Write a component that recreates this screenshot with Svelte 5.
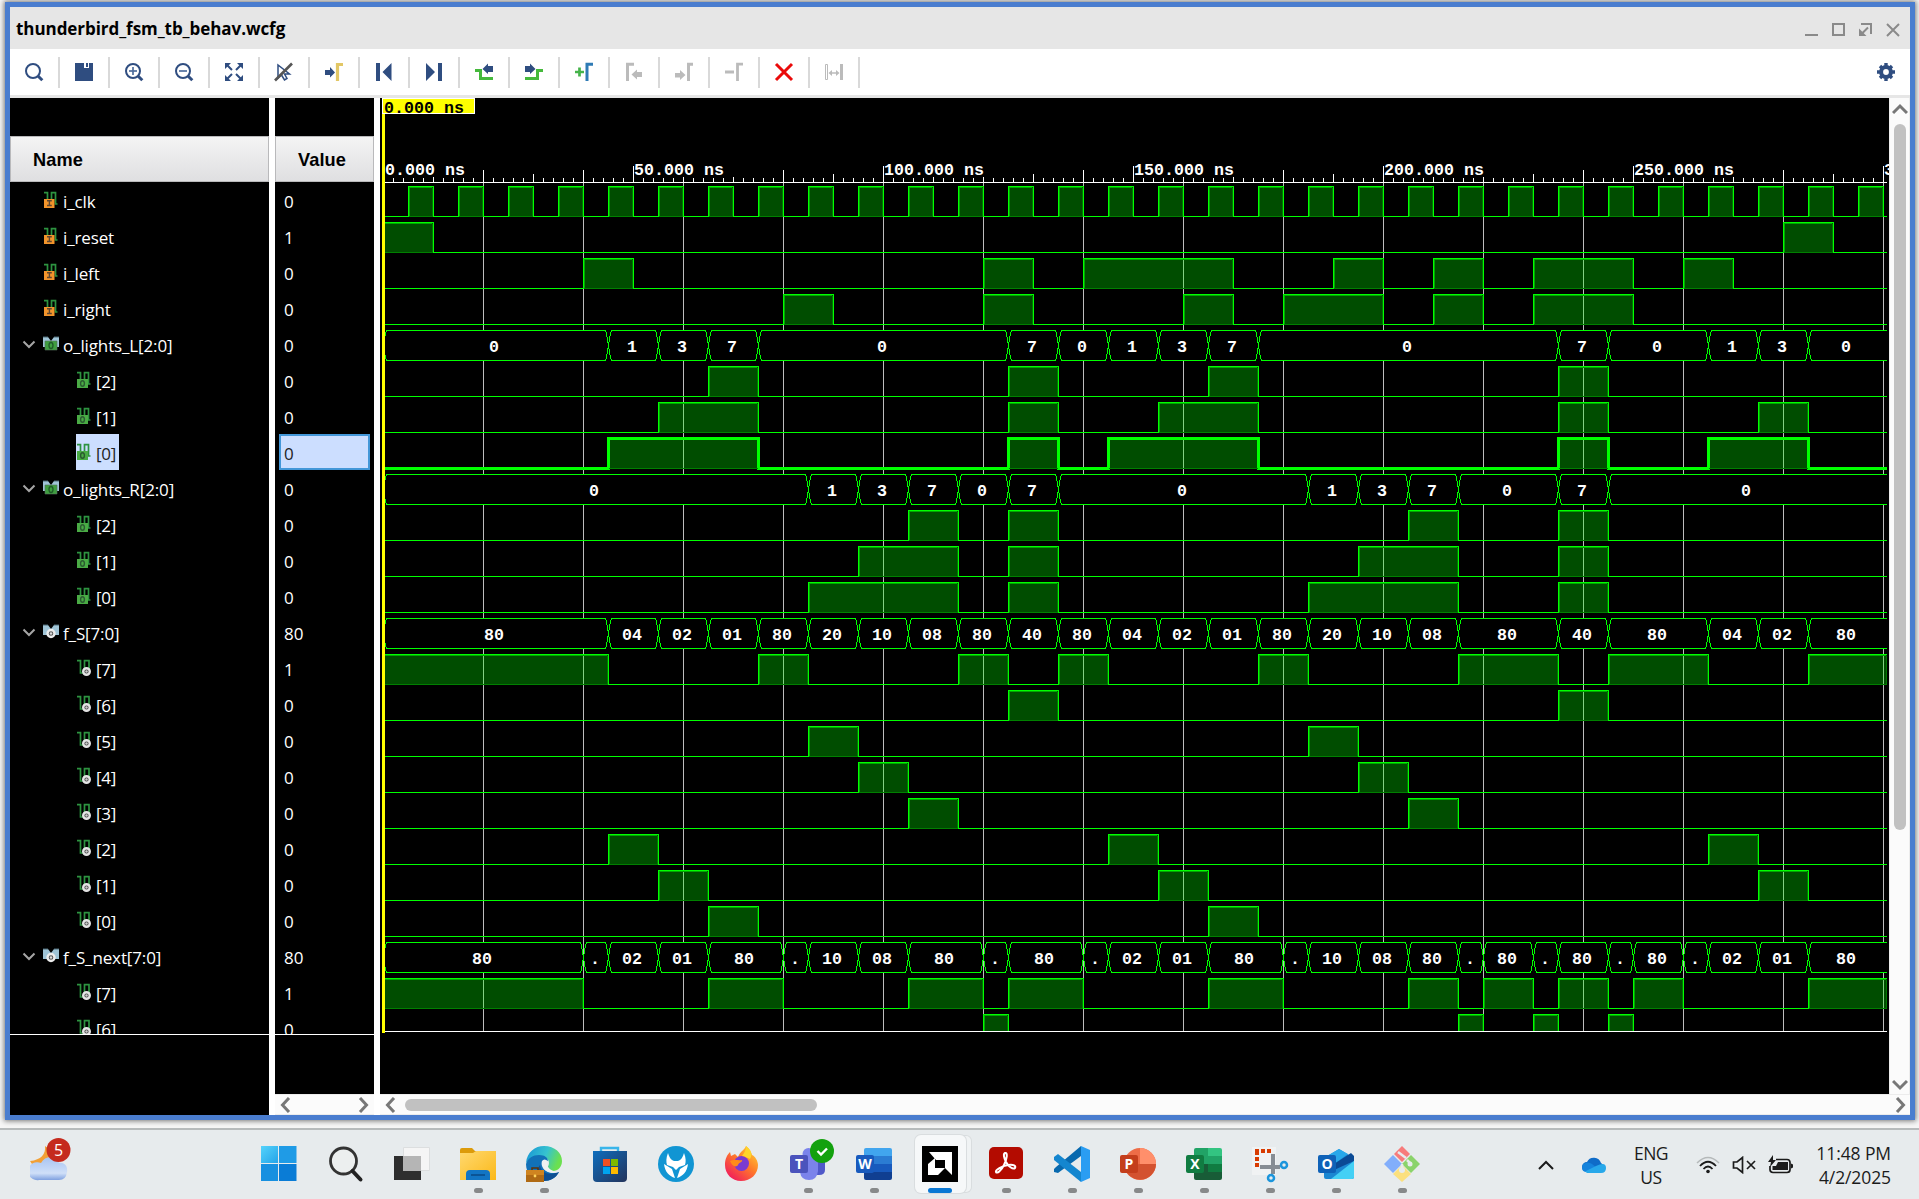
<script>
  // Time axis: 5px per nanosecond, starting at x = 383
  const X0 = 383, PX = 5, XEND = 1887, TOP = 186, PITCH = 36;
  const tx = (t) => Math.min(X0 + t * PX, XEND);

  const clk = Array.from({ length: 30 }, (_, i) => [i * 10 + 5, i * 10 + 10]);

  const bus = (start) => start.split(' ').map((s) => {
    const [t, v] = s.split('=');
    return { t: +t, v };
  });

  const signals = [
    { name: 'i_clk', kind: 'in', value: '0', high: clk },
    { name: 'i_reset', kind: 'in', value: '1', high: [[0, 10], [280, 290]] },
    { name: 'i_left', kind: 'in', value: '0', high: [[40, 50], [120, 130], [140, 170], [190, 200], [210, 220], [230, 250], [260, 270]] },
    { name: 'i_right', kind: 'in', value: '0', high: [[80, 90], [120, 130], [160, 170], [180, 200], [210, 220], [230, 250]] },
    { name: 'o_lights_L[2:0]', kind: 'outbus', group: true, value: '0', bus: bus('0=0 45=1 55=3 65=7 75=0 125=7 135=0 145=1 155=3 165=7 175=0 235=7 245=0 265=1 275=3 285=0') },
    { name: '[2]', kind: 'out', child: true, value: '0', high: [[65, 75], [125, 135], [165, 175], [235, 245]] },
    { name: '[1]', kind: 'out', child: true, value: '0', high: [[55, 75], [125, 135], [155, 175], [235, 245], [275, 285]] },
    { name: '[0]', kind: 'out', child: true, selected: true, value: '0', high: [[45, 75], [125, 135], [145, 175], [235, 245], [265, 285]] },
    { name: 'o_lights_R[2:0]', kind: 'outbus', group: true, value: '0', bus: bus('0=0 85=1 95=3 105=7 115=0 125=7 135=0 185=1 195=3 205=7 215=0 235=7 245=0') },
    { name: '[2]', kind: 'out', child: true, value: '0', high: [[105, 115], [125, 135], [205, 215], [235, 245]] },
    { name: '[1]', kind: 'out', child: true, value: '0', high: [[95, 115], [125, 135], [195, 215], [235, 245]] },
    { name: '[0]', kind: 'out', child: true, value: '0', high: [[85, 115], [125, 135], [185, 215], [235, 245]] },
    { name: 'f_S[7:0]', kind: 'sigbus', group: true, value: '80', bus: bus('0=80 45=04 55=02 65=01 75=80 85=20 95=10 105=08 115=80 125=40 135=80 145=04 155=02 165=01 175=80 185=20 195=10 205=08 215=80 235=40 245=80 265=04 275=02 285=80') },
    { name: '[7]', kind: 'sig', child: true, value: '1', high: [[0, 45], [75, 85], [115, 125], [135, 145], [175, 185], [215, 235], [245, 265], [285, 310]] },
    { name: '[6]', kind: 'sig', child: true, value: '0', high: [[125, 135], [235, 245]] },
    { name: '[5]', kind: 'sig', child: true, value: '0', high: [[85, 95], [185, 195]] },
    { name: '[4]', kind: 'sig', child: true, value: '0', high: [[95, 105], [195, 205]] },
    { name: '[3]', kind: 'sig', child: true, value: '0', high: [[105, 115], [205, 215]] },
    { name: '[2]', kind: 'sig', child: true, value: '0', high: [[45, 55], [145, 155], [265, 275]] },
    { name: '[1]', kind: 'sig', child: true, value: '0', high: [[55, 65], [155, 165], [275, 285]] },
    { name: '[0]', kind: 'sig', child: true, value: '0', high: [[65, 75], [165, 175]] },
    { name: 'f_S_next[7:0]', kind: 'sigbus', group: true, value: '80', bus: bus('0=80 40=. 45=02 55=01 65=80 80=. 85=10 95=08 105=80 120=. 125=80 140=. 145=02 155=01 165=80 180=. 185=10 195=08 205=80 215=. 220=80 230=. 235=80 245=. 250=80 260=. 265=02 275=01 285=80') },
    { name: '[7]', kind: 'sig', child: true, value: '1', high: [[0, 40], [65, 80], [105, 120], [125, 140], [165, 180], [205, 215], [220, 230], [235, 245], [250, 260], [285, 310]] },
    { name: '[6]', kind: 'sig', child: true, value: '0', high: [[120, 125], [215, 220], [230, 235], [245, 250]] }
  ];

  // Outline of a single-bit signal
  function tracePath(high, y) {
    const hi = y + 0.5, lo = y + 30.5;
    let d = `M${X0} ${high[0][0] === 0 ? hi : lo}`;
    for (const [a, b] of high) {
      if (a > 0) d += `H${tx(a) + 0.5}V${hi}`;
      if (b <= 300) d += `H${tx(b) + 0.5}V${lo}`;
    }
    return d + `H${XEND}`;
  }

  function segments(items) {
    return items.map((it, i) => {
      const last = i === items.length - 1;
      return { a: tx(it.t), b: last ? XEND : tx(items[i + 1].t), v: it.v, last };
    });
  }

  function hexPath(s, y) {
    const a = s.a + 0.5, b = s.b + 0.5, t = y + 0.5, m = y + 15.5, l = y + 30.5;
    if (s.last) return `M${s.b} ${t}H${a + 3}L${a + 2} ${t + 3}L${a} ${m}L${a + 2} ${l - 3}L${a + 3} ${l}H${s.b}`;
    return `M${a} ${m}L${a + 2} ${t + 3}L${a + 3} ${t}H${b - 3}L${b - 2} ${t + 3}L${b} ${m}L${b - 2} ${l - 3}L${b - 3} ${l}H${a + 3}L${a + 2} ${l - 3}Z`;
  }

  // Ruler ticks every 2ns, taller on tens; ticks below a label stay short
  const ticks = [];
  for (let t = 2; t <= 300; t += 2) {
    let y = 178;
    if (t % 50 === 0) y = 166;
    else if (t % 10 === 0) {
      const r = t % 50;
      if (r === 10 || (r === 20 && t > 50)) y = 177;
      else y = t % 20 === 0 ? 170 : 174;
    }
    ticks.push({ x: tx(t), y });
  }
  const grid = Array.from({ length: 15 }, (_, i) => tx((i + 1) * 20));
  const labels = [0, 50, 100, 150, 200, 250, 300];

  const tools = ['search', 'save', 'zoomin', 'zoomout', 'fit', 'nocursor', 'gotocursor', 'first', 'last', 'prevedge', 'nextedge', 'addmarker', 'prevmarker', 'nextmarker', 'delmarker', 'remove', 'span'];
  const apps = ['start', 'find', 'taskview', 'explorer', 'edge', 'store', 'wolf', 'firefox', 'teams', 'word', 'amd', 'acrobat', 'vscode', 'ppt', 'excel', 'snip', 'outlook', 'git'];
  const running = ['explorer', 'edge', 'teams', 'word', 'acrobat', 'vscode', 'ppt', 'excel', 'snip', 'outlook', 'git'];
</script>

{#snippet toolIcon(k)}
  <svg width="20" height="20" viewBox="0 0 20 20" fill="none">
    {#if k === 'search' || k === 'zoomin' || k === 'zoomout'}
      <circle cx="9" cy="9" r="7" stroke="#2f4d80" stroke-width="2" />
      <path d="M14 14l4.3 4.3" stroke="#2f4d80" stroke-width="3" />
      {#if k !== 'search'}<path d="M5 9h8" stroke="#4e6d9c" stroke-width="1.7" />{/if}
      {#if k === 'zoomin'}<path d="M9 5v8" stroke="#4e6d9c" stroke-width="1.7" />{/if}
    {:else if k === 'save'}
      <path d="M1 1h10v5h2V1h1v5h1V1h4v18H1z" fill="#2f4d80" /><path d="M10 1h5v5h-5z" fill="#fff" /><path d="M12 1h2v4h-2z" fill="#2f4d80" />
    {:else if k === 'fit'}
      <path d="M1 1h6L1 7zM19 1v6l-6-6zM1 19v-6l6 6zM19 19h-6l6-6z" fill="#2f4d80" />
      <path d="M3 3l5 5M17 3l-5 5M3 17l5-5M17 17l-5-5" stroke="#2f4d80" stroke-width="2" />
    {:else if k === 'nocursor'}
      <path d="M4 3v13l3.500-3 3 5 2.500-1.500-2.500-4.500h5z" stroke="#2f4d80" stroke-width="1.500" />
      <path d="M1 18.500L18 1.500" stroke="#555" stroke-width="2.600" />
    {:else if k === 'gotocursor'}
      <path d="M1 8h5V5l5 5.500-5 5V13H1z" fill="#2f4d80" /><path d="M13.500 19V2.500H19" stroke="#e2c766" stroke-width="3.200" />
    {:else if k === 'first'}
      <path d="M2 1h4v18H2zM17.500 1v18L8.500 10z" fill="#2f4d80" />
    {:else if k === 'last'}
      <path d="M14 1h4v18h-4zM2 1v18l9-9z" fill="#2f4d80" />
    {:else if k === 'prevedge'}
      <path d="M1 8.500h5.500v8H19" stroke="#45b93c" stroke-width="3" /><path d="M19 4h-5V1.500L8.500 7l5.500 5v-2h5z" fill="#2f4d80" />
    {:else if k === 'nextedge'}
      <path d="M19 8.500h-5.500v8H1" stroke="#45b93c" stroke-width="3" /><path d="M1 4h5V1.500L11.500 7 6 12v-2H1z" fill="#2f4d80" />
    {:else if k === 'addmarker'}
      <path d="M1 10h9M5.500 5.500v9" stroke="#45b34a" stroke-width="2.700" /><path d="M13 19V2.300H19" stroke="#2f7bb5" stroke-width="3" />
    {:else if k === 'prevmarker'}
      <path d="M3.500 19V2.200H10" stroke="#bbb" stroke-width="3" /><path d="M18 10h-5V7.500L7.500 12.500l5.500 5V15h5z" fill="#bbb" />
    {:else if k === 'nextmarker'}
      <path d="M14.500 19V2.200H19" stroke="#bbb" stroke-width="3" /><path d="M1 11h5V8l5.500 5L6 18v-2.500H1z" fill="#bbb" />
    {:else if k === 'delmarker'}
      <path d="M13.500 19V2.200H19M1 10h9" stroke="#bbb" stroke-width="2.800" />
    {:else if k === 'remove'}
      <path d="M2 2l16 16M18 2L2 18" stroke="#ea0a0a" stroke-width="3" />
    {:else}
      <path d="M1.500 2.500h2v15h-2z" stroke="#bbb" /><path d="M16 2h3v16h-3z" fill="#bbb" />
      <path d="M6 11h8" stroke="#bbb" stroke-width="1.500" /><path d="M8 8v6l-3.500-3zM12 8v6l3.500-3z" fill="#bbb" />
    {/if}
  </svg>
{/snippet}

{#snippet sigIcon(k)}
  <svg width="16" height="18" viewBox="0 0 16 18" fill="none">
    {#if k === 'outbus' || k === 'sigbus'}
      <path d="M0 2h5l3 4 3-4h5v10H0z" fill="#9fc4d6" /><path d="M0 2h5M11 2h5" stroke="#4b6673" />
      {#if k === 'outbus'}
        <path d="M2 6h12v9H2z" fill="#3f9f40" stroke="#56705a" stroke-width=".6" /><ellipse cx="8" cy="10.500" rx="2" ry="3" stroke="#1f5a28" stroke-width="1.300" />
      {:else}
        <circle cx="8" cy="10.500" r="3.500" stroke="#ececec" stroke-width="2.400" fill="#555" /><circle cx="8" cy="10.500" r="1.200" fill="#ddd" />
      {/if}
    {:else if k === 'sig'}
      <path d="M1 1.700h3.500V14h4V1.700h4.500V14" stroke="#2d9340" stroke-width="1.700" />
      <circle cx="10.500" cy="12.500" r="3.300" stroke="#e4e4e4" stroke-width="2.400" fill="#444" /><circle cx="10.500" cy="12.500" r="1.200" fill="#ccc" />
    {:else}
      <path d="M1 1.700h3.500V11h4V1.700h4V13h2" stroke="#2d9340" stroke-width="1.700" />
      {#if k === 'in'}
        <path d="M1 8h10.500v9H1z" fill="#f2942b" /><path d="M4 9.800h4.800M4 14.500h4.800M6.400 9.800v4.700" stroke="#5d4630" stroke-width="1.400" />
      {:else}
        <path d="M1 8h11v9H1z" fill="#4aab45" /><ellipse cx="6.500" cy="12.500" rx="1.900" ry="2.800" stroke="#2b5b31" stroke-width="1.400" />
      {/if}
    {/if}
  </svg>
{/snippet}

{#snippet arrow(d)}
  <svg width="16" height="16" viewBox="0 0 16 16" fill="none"><path {d} stroke="#777" stroke-width="3" /></svg>
{/snippet}

{#snippet badge(letter, color)}
  <rect x="0" y="9" width="18" height="18" rx="2" fill={color} />
  <text x="9" y="23" text-anchor="middle" class="badge-letter">{letter}</text>
{/snippet}

{#snippet appIcon(k)}
  <svg width="36" height="36" viewBox="0 0 36 36" fill="none">
    {#if k === 'start'}
      <path d="M-1 0h17v17H-1z" fill="url(#wa)" /><path d="M17 0h17.500v17H17z" fill="#1f9be6" /><path d="M-1 18h17v17H-1z" fill="#1790e0" /><path d="M17 18h17.500v17H17z" fill="#0a7cd6" />
    {:else if k === 'find'}
      <circle cx="15.500" cy="15" r="13" fill="#ecefef" stroke="#333" stroke-width="2.800" /><path d="M24.500 25l8 8.500" stroke="#222" stroke-width="4" stroke-linecap="round" />
    {:else if k === 'taskview'}
      <path d="M0 10h27v24H0z" fill="#2e2e2e" /><path d="M9.500 1.500h26v23h-26z" fill="#f5f5f5" stroke="#dcdedf" /><path d="M9 10h18v15H9z" fill="#b5b5b5" />
    {:else if k === 'explorer'}
      <path d="M0 4q0-2 2-2h10l3 3h19q2 0 2 2v5H0z" fill="#dc9b0b" /><path d="M0 7h13l3-2h20v29H0z" fill="url(#fold)" /><path d="M6 34v-6q0-4 4-4h16q4 0 4 4v6z" fill="#1275c4" /><path d="M11 29h14" stroke="#0a4a86" stroke-width="1.500" />
    {:else if k === 'edge'}
      <path d="M0 17C1 6 9 0 18 0c11 0 18 7 18 15 0 6-4 10-9 10-4 0-6-1-6-3 0-1 2-2 2-5 0-4-4-7-9-7-7 0-12 5-14 7z" fill="url(#edg)" />
      <path d="M0 18C2 12 7 9 13 9c6 0 9 3 9 6-4 0-6 4-4 8 3 4 9 5 15 3-3 6-9 9-15 9C8 36 0 28 0 18z" fill="#1271b8" />
      <path d="M14 19c1 8 9 11 19 7-3 6-9 9-15 9-6-3-8-11-4-16z" fill="#0f4f92" />
      <path d="M16 15q2-3 6 0c-2 4 0 10 11 11-7 2-15 0-17-6-.6-2-.4-4 0-5z" fill="#eef1f2" />
      <path d="M0 24h18v12H0z" fill="#b06a14" /><path d="M0 24h18v5H0z" fill="#cf8420" /><path d="M6 24v-2h6v2" stroke="#5d3208" stroke-width="1.500" /><circle cx="9" cy="30" r="1.400" fill="#ffd45a" />
    {:else if k === 'store'}
      <path d="M9 6V2h17v4" stroke="#39b5ea" stroke-width="2.400" /><path d="M1 5h34v27q0 4-4 4H5q-4 0-4-4z" fill="url(#sto)" />
      <path d="M11 13h7v7h-7z" fill="#f25022" /><path d="M19 13h7v7h-7z" fill="#7fba00" /><path d="M11 21h7v7h-7z" fill="#00a4ef" /><path d="M19 21h7v7h-7z" fill="#ffb900" />
    {:else if k === 'wolf'}
      <circle cx="18" cy="18" r="18" fill="#1195d3" />
      <path d="M10 7c1 4 3 7 6 8h4c3-1 5-4 6-8 2 5 2 9 1 12l-6 2-3 3-3-3-6-2c-1-3-1-7 1-12z" fill="#fff" />
      <path d="M6 18l8 5 3 9C11 30 7 26 6 18zM30 18l-8 5-3 9c6-2 10-6 11-14z" fill="#fff" />
    {:else if k === 'firefox'}
      <path d="M22 0c4 3 5 6 6 9 3 1 6 6 6 10 0 9-7 16-17 16C8 35 1 28 1 19 1 13 3 9 6 6l1 4 4-2 3 3C17 4 20 5 22 0z" fill="url(#ffx)" /><circle cx="17.500" cy="17.500" r="7.500" fill="#7a3bd0" /><path d="M6 15c4-2 9 0 12-1 1 2-3 2-4 5-2 3-6 1-8-4z" fill="#ff8b19" /><path d="M22 0c5 4 7 8 4 13-3-1-5-3-8-3 2-3 4-5 4-10z" fill="#ffd52b" />
    {:else if k === 'teams'}
      <circle cx="18.500" cy="8" r="6" fill="#7b83eb" /><path d="M22 12h13v12q0 5-6 5h-7z" fill="#5059c9" /><path d="M10 12h18v13q-1 9-9 9t-9-8z" fill="#7b83eb" />
      {@render badge('T', '#4b53bc')}
    {:else if k === 'word'}
      <path d="M8 4q0-2 2-2h24q2 0 2 2v6H8z" fill="#41a5ee" /><path d="M8 10h28v8H8z" fill="#2b7cd3" /><path d="M8 18h28v8H8z" fill="#185abd" /><path d="M8 26h28v6q0 2-2 2H10q-2 0-2-2z" fill="#103f91" />
      {@render badge('W', '#185abd')}
    {:else if k === 'amd'}
      <path d="M0 0h36v36H0z" fill="#000" /><path d="M7 6h23v23l-7-7v-8h-9z" fill="#fff" /><path d="M6 29V18l7-6v10h10l-7 7z" fill="#fff" />
    {:else if k === 'acrobat'}
      <rect x="1" y="1" width="34" height="32" rx="5" fill="#b30b00" /><path d="M17 7c3-1 2 6-1 12-3 6-7 9-8 7s6-6 12-7c6-1 8 1 7 3-2 2-7-2-9-6s-3-8-1-9z" stroke="#fff" stroke-width="2" />
    {:else if k === 'vscode'}
      <path d="M27 0L2 21l-2 2v3l4 1L27 10z" fill="#0869ae" /><path d="M0 11l4-3 23 18v10L0 14z" fill="#1486cf" /><path d="M27 0l9 4v28l-9 4z" fill="#2a9df2" />
    {:else if k === 'ppt'}
      <circle cx="20" cy="18" r="16" fill="#ed6c47" /><path d="M20 2a16 16 0 0 1 16 16H20z" fill="#ff8f6b" /><path d="M4.200 20A16 16 0 0 0 36 18H20z" fill="#d35230" />
      {@render badge('P', '#c43e1c')}
    {:else if k === 'excel'}
      <path d="M8 4q0-2 2-2h12v16H8z" fill="#21a366" /><path d="M22 2h12q2 0 2 2v6H22z" fill="#33c481" /><path d="M22 10h14v8H22z" fill="#21a366" /><path d="M8 18h28v14q0 2-2 2H10q-2 0-2-2z" fill="#185c37" /><path d="M22 18h14v8H22z" fill="#107c41" />
      {@render badge('X', '#107c41')}
    {:else if k === 'snip'}
      <path d="M0 1h24v28H0z" fill="#f0f2f3" /><path d="M3 5h17M5 5v16" stroke="#d83b01" stroke-width="4" stroke-dasharray="4 2" /><path d="M21 8v20M8 21h20" stroke="#878d94" stroke-width="4" /><circle cx="32" cy="19" r="3" stroke="#1b95dc" stroke-width="2.500" /><circle cx="19" cy="32" r="3" stroke="#1b95dc" stroke-width="2.500" />
    {:else if k === 'outlook'}
      <path d="M6 12L21 3l15 9v19q0 2-2 2H8q-2 0-2-2z" fill="#1b87d2" /><path d="M9 10l12-7 9 5-14 10z" fill="#28a8ea" /><path d="M16 18L33 7l3 3v5L16 24z" fill="#0b4a95" /><path d="M36 15v16q0 2-2 2H13z" fill="#44d0f5" />
      {@render badge('O', '#0f62b8')}
    {:else}
      <path d="M18 0l8 8-8 8-8-8z" fill="#f77b7b" /><path d="M9 9l9 9-9 9-9-9z" fill="#82aefb" /><path d="M27 9l9 9-9 9-9-9z" fill="#8bd36b" /><path d="M18 19l9 9-9 8-9-8z" fill="#fbe07e" /><circle cx="18" cy="24" r="3" fill="#e7ebed" /><path d="M18 18v6M23 14l4 4" stroke="#e7ebed" stroke-width="2.500" /><circle cx="26" cy="18" r="2.500" fill="#e7ebed" /><path d="M14 6l8 6" stroke="#e7ebed" stroke-width="2.500" />
    {/if}
  </svg>
{/snippet}

<svg class="defs" width="0" height="0">
  <defs>
    <linearGradient id="wa" x1="0" y1="0" x2="1" y2="1"><stop offset="0" stop-color="#55d3fb" /><stop offset="1" stop-color="#24a4e9" /></linearGradient>
    <linearGradient id="fold" x1="0" y1="0" x2="1" y2="1"><stop offset="0" stop-color="#ffd970" /><stop offset="1" stop-color="#fbb818" /></linearGradient>
    <linearGradient id="edg" x1="0" y1="0" x2="1" y2=".3"><stop offset="0" stop-color="#1692d6" /><stop offset=".6" stop-color="#36c3cf" /><stop offset="1" stop-color="#6be04f" /></linearGradient>
    <linearGradient id="sto" x1="0" y1="0" x2="1" y2="1"><stop offset="0" stop-color="#0e6dbd" /><stop offset="1" stop-color="#24345c" /></linearGradient>
    <linearGradient id="ffx" x1="1" y1="0" x2=".2" y2="1"><stop offset="0" stop-color="#ffdf35" /><stop offset=".5" stop-color="#ff7a29" /><stop offset="1" stop-color="#f0185f" /></linearGradient>
    <linearGradient id="sky" x1="0" y1="0" x2="0" y2="1"><stop offset="0" stop-color="#a8c4f2" /><stop offset=".7" stop-color="#cfdff8" /><stop offset="1" stop-color="#7d9fdf" /></linearGradient>
  </defs>
</svg>

<div class="screen">
  <div class="desk">
    <div class="window">
      <header class="title">
        <span class="file">thunderbird_fsm_tb_behav.wcfg</span>
        <div class="winbtns">
          <svg width="14" height="14" viewBox="0 0 14 14"><path d="M0 12h13" /></svg>
          <svg width="14" height="14" viewBox="0 0 14 14"><path d="M1 1h11v11H1z" /></svg>
          <svg width="14" height="14" viewBox="0 0 14 14"><path d="M2 1h10v10M9 4.500L3 10.500" /><path class="solid" d="M0 5.500V13h7.500z" /></svg>
          <svg width="14" height="14" viewBox="0 0 14 14"><path d="M1 1l12 12M13 1L1 13" /></svg>
        </div>
      </header>

      <div class="toolbar">
        {#each tools as t}<div class="tool">{@render toolIcon(t)}</div>{/each}
        <svg class="gear" width="20" height="20" viewBox="-10 -10 20 20">
          <circle r="4.900" fill="none" stroke="#2f4d80" stroke-width="4" />
          <path d="M0-9V-6M0 9V6M-9 0H-6M9 0H6M-6-6l2 2M6 6l-2-2M-6 6l2-2M6-6l-2 2" stroke="#2f4d80" stroke-width="3.400" />
        </svg>
      </div>

      <main class="content">
        <section class="col names">
          <div class="head">Name</div>
          <div class="rows">
            {#each signals as s}
              <div class="row" class:child={s.child} class:group={s.group}>
                {#if s.group}
                  <svg class="chev" width="14" height="10" viewBox="0 0 14 10" fill="none"><path d="M1.500 1.500L7 7l5.500-5.500" stroke="#a5a5a5" stroke-width="2" /></svg>
                {/if}
                <span class="label" class:selected={s.selected}>{@render sigIcon(s.kind)}<span>{s.name}</span></span>
              </div>
            {/each}
          </div>
        </section>

        <section class="col values">
          <div class="head">Value</div>
          <div class="rows">
            {#each signals as s}<div class="val" class:picked={s.selected}>{s.value}</div>{/each}
          </div>
          <div class="hbar narrow">{@render arrow('M12 1L5.500 8l6.500 7')}<span class="grow"></span>{@render arrow('M4 1l6.500 7L4 15')}</div>
        </section>

        <section class="waves">
          <svg class="plot" width="1509" height="996" viewBox="380 98 1509 996">
            <defs><clipPath id="area"><rect x="380" y="182" width="1507" height="849" /></clipPath></defs>
            <g shape-rendering="crispEdges">
              {#each grid as x}<path class="grid" d="M{x + 0.5} 183V1031" />{/each}
              {#each ticks as t}<path class="tick" d="M{t.x + 0.5} {t.y}V182" />{/each}
              <path class="tick" d="M383 182.500H1887" />
              <g clip-path="url(#area)">
                {#each signals as s, i}
                  {@const y = TOP + i * PITCH}
                  {#if s.bus}
                    {#each segments(s.bus) as g}
                      <path class="hex" d={hexPath(g, y)} />
                    {/each}
                  {:else}
                    <path class="trace" class:bold={s.selected} d={tracePath(s.high, y)} />
                    {#each s.high as [a, b]}
                      <rect class="under" x={tx(a) + (a ? 1 : 0)} y={y + 30} width={tx(b) - tx(a) - (a ? 1 : 0)} height="1" />
                      <rect class="fill" x={tx(a) + (a ? 1 : 0)} y={y + 1} width={tx(b) - tx(a) - (a ? 1 : 0)} height="30" />
                      {#if !s.selected}
                        <path class="inner" d="M{tx(a) + 1.5} {y + 30}V{y + 1.5}H{tx(b) - 1}" />
                        <path class="edge" d="M{tx(b) - 0.5} {y + 2}V{y + 30}" />
                      {/if}
                    {/each}
                  {/if}
                {/each}
              </g>
              <path class="tick" d="M383 1031.500H1887" />
              <rect x="382" y="98" width="93" height="16" fill="#fff" />
              <rect x="383" y="99" width="91" height="14" fill="#ff0" />
              <rect x="382" y="114" width="3" height="919" fill="#ff0" />
            </g>
            <text class="mono dark" x="384" y="113">0.000 ns</text>
            {#each labels as l}<text class="mono" x={tx(l) + (l ? 1 : 2)} y="175">{l}.000 ns</text>{/each}
            {#each signals as s, i}
              {#if s.bus}
                {#each segments(s.bus) as g}
                  <text class="mono" text-anchor="middle" x={Math.floor((g.a + g.b) / 2) - (g.v === '.' ? 0 : 1)} y={TOP + i * PITCH + 22}>{g.v}</text>
                {/each}
              {/if}
            {/each}
          </svg>
          <div class="hbar wide">{@render arrow('M12 1L5.500 8l6.500 7')}<span class="thumb"></span><span class="grow"></span>{@render arrow('M4 1l6.500 7L4 15')}</div>
        </section>

        <div class="vbar">
          {@render arrow('M1 12l7-7 7 7')}
          <span class="vthumb"></span>
          <span class="grow"></span>
          {@render arrow('M1 4l7 7 7-7')}
        </div>
      </main>
    </div>
  </div>

  <footer class="taskbar">
    <div class="weather">
      <svg width="44" height="46" viewBox="0 0 44 46">
        <path d="M15 8c1 8-4 14-15 15 4 8 15 8 20 0 3-6 0-12-5-15z" fill="#f2a036" />
        <path d="M9 42a9 9 0 1 1 2-17c4-8 15-8 18 0 5-1 9 3 8 9q-1 8-8 8z" fill="url(#sky)" />
        <circle cx="28.500" cy="12" r="12" fill="#c52b1e" />
        <text x="28.500" y="17.500" text-anchor="middle" class="count">5</text>
      </svg>
    </div>
    <nav class="apps">
      {#each apps as a}
        <div class="app" class:active={a === 'amd'}>
          <div class="tile">{@render appIcon(a)}</div>
          <span class="dot" class:on={running.includes(a)}></span>
          {#if a === 'teams'}
            <svg class="status" width="24" height="24" viewBox="0 0 24 24"><circle cx="12" cy="12" r="12" fill="#13a10e" /><path d="M7.500 12l3.500 3.500 6-6" fill="none" stroke="#fff" stroke-width="2.400" /></svg>
          {/if}
        </div>
      {/each}
    </nav>
    <div class="tray">
      <svg width="16" height="10" viewBox="0 0 16 10"><path d="M1 9l7-7 7 7" fill="none" stroke="#1b1b1b" stroke-width="2" /></svg>
      <svg class="cloud" width="24" height="16" viewBox="0 0 24 16"><path d="M5 15a5 5 0 0 1 0-10 7.500 7.500 0 0 1 14 1 5 5 0 0 1 0 9z" fill="#0f6cc8" /><path d="M1 7q5-3 9 0l10 8H5Q-2 15 1 7z" fill="#1583dc" /><path d="M3 14.500L14 9q10-5 10 2 0 5-5 5H5z" fill="#28a8ea" /></svg>
      <div class="lang">ENG<br />US</div>
      <svg class="wifi" width="24" height="18" viewBox="0 0 24 18" fill="none" stroke="#1b1b1b" stroke-width="1.800"><path d="M1 7q11-11 22 0" stroke="#b5b9ba" stroke-width="1.500" /><path d="M4 10q8-8.500 16 0M7.500 13q4.500-5 9 0" /><circle cx="12" cy="15.500" r="1.800" fill="#1b1b1b" stroke="none" /></svg>
      <svg class="vol" width="24" height="18" viewBox="0 0 24 18" fill="none" stroke="#1b1b1b" stroke-width="1.700"><path d="M1.500 6h3.500l5.500-4.500v15L5 12H1.500zM15 5l8 8M23 5l-8 8" /></svg>
      <svg class="bat" width="26" height="20" viewBox="0 0 26 20"><path d="M8 4.500h11q3 0 3 3v7q0 3-3 3H5q-3 0-3-3V11" fill="none" stroke="#1b1b1b" stroke-width="1.700" /><path d="M10 7h10v8H4.500v-4H8z" fill="#1b1b1b" /><path d="M23 8.500l2 1v3l-2 1zM5 0L0 7h3L2 12l6-7H5z" fill="#1b1b1b" /></svg>
      <div class="clock">11:48 PM<br />4/2/2025</div>
    </div>
  </footer>
</div>

<style>
  :global(body) { margin: 0; overflow: hidden; }
  .defs { position: absolute; }
  .screen { width: 1919px; height: 1199px; display: flex; flex-direction: column; font-family: "Open Sans", "Noto Sans", sans-serif; background: #fff; overflow: hidden; }
  .desk { height: 1128px; padding: 2px 4px 8px 5px; box-sizing: border-box; background: #f6f6f6; flex: none; }
  .window { height: 1118px; box-sizing: border-box; border: 5px solid #4a7dcf; box-shadow: 0 0 5px 1px #777; background: #fff; display: flex; flex-direction: column; }
  .title { height: 42px; background: #e6e6e6; display: flex; align-items: center; justify-content: space-between; padding: 0 10px 0 6px; }
  .file { font-weight: 700; font-size: 17px; letter-spacing: -0.06px; color: #000; }
  .winbtns { display: flex; gap: 13px; padding-top: 3px; }
  .winbtns path { fill: none; stroke: #8a8a8a; stroke-width: 2; }
  .winbtns path.solid { fill: #8a8a8a; stroke: none; }
  .toolbar { height: 49px; box-sizing: border-box; border-bottom: 3px solid #e6e6e6; display: flex; align-items: center; background: #fff; }
  .tool { width: 50px; height: 31px; box-sizing: border-box; border-right: 2px solid #d9d9d9; display: flex; align-items: center; justify-content: center; }
  .gear { margin-left: auto; margin-right: 14px; }
  .content { height: 1017px; display: flex; gap: 6px; }
  .col { background: #000; display: flex; flex-direction: column; color: #fff; padding-top: 38px; box-sizing: border-box; }
  .names { width: 259px; }
  .values { width: 99px; }
  .head { height: 46px; flex: none; box-sizing: border-box; border: 1px solid #b9b9bb; background: linear-gradient(#f4f4f4, #dfdfe1); color: #000; font: 700 18.200px "Liberation Sans", sans-serif; letter-spacing: 0.1px; display: flex; align-items: center; padding: 2px 0 0 22px; }
  .rows { height: 852px; flex: none; overflow: hidden; border-bottom: 1px solid #fff; font-size: 17px; }
  .row { height: 36px; display: flex; align-items: center; padding-left: 33px; }
  .row.group { padding-left: 12px; gap: 7px; }
  .row.child { padding-left: 66px; }
  .chev { margin-top: 1px; }
  .label { height: 36px; display: flex; align-items: center; gap: 4px; padding-right: 3px; letter-spacing: -0.13px; white-space: nowrap; }
  .child .label { letter-spacing: -0.3px; }
  .label span { padding-top: 2px; }
  .label.selected, .val.picked { background: #ccdeff; color: #222; }
  .val { height: 36px; line-height: 39px; box-sizing: border-box; padding-left: 9px; letter-spacing: 0.1px; }
  .val.picked { margin: 0 4px; padding-left: 3px; border: 2px solid #4397d8; line-height: 35px; }
  .hbar { margin-top: auto; height: 21px; box-sizing: border-box; background: #fbfbfb; border: 1px solid #ececec; border-width: 1px 0; display: flex; align-items: center; padding: 0 2px; }
  .hbar.narrow { padding: 0 2px; }
  .grow { flex: 1; }
  .waves { width: 1509px; background: #000; display: flex; flex-direction: column; }
  .plot { display: block; }
  .thumb { width: 412px; height: 12px; border-radius: 6px; background: #c1c1c1; margin-left: 7px; }
  .hbar.wide { width: 1530px; padding-right: 1px; }
  .vbar { width: 21px; height: 996px; margin-left: -6px; box-sizing: border-box; background: #fbfbfb; border: 1px solid #ececec; border-width: 0 1px; display: flex; flex-direction: column; align-items: center; padding: 3px 0 1px; }
  .vthumb { width: 12px; height: 706px; border-radius: 6px; background: #c1c1c1; margin-top: 7px; }
  .grid { stroke: #bdbdbd; }
  .tick { stroke: #fff; }
  .trace { stroke: #0f0; fill: none; }
  .trace.bold { stroke-width: 3; }
  .fill { fill: #0f0; fill-opacity: 0.3; }
  .under { fill: #004a00; }
  .inner { stroke: #00a800; fill: none; }
  .edge { stroke: #007a00; fill: none; }
  .hex { stroke: #0f0; fill: #000; }
  .mono { font: 700 16.670px "Liberation Mono", monospace; fill: #fff; }
  .mono.dark { fill: #000; }
  .taskbar { height: 71px; box-sizing: border-box; border-top: 2px solid #b7bbbc; background: #e7ebed; display: flex; position: relative; }
  .weather { width: 247px; box-sizing: border-box; padding: 8px 0 0 30px; }
  .count { font-size: 16px; fill: #fff; }
  .apps { display: flex; }
  .app { width: 66px; display: flex; flex-direction: column; align-items: center; position: relative; }
  .app svg { overflow: visible; }
  .tile { width: 56px; height: 58px; margin-top: 5px; display: flex; align-items: center; justify-content: center; box-sizing: border-box; border-radius: 6px; }
  .active .tile { width: 51px; background: #f6f8f9; box-shadow: 0 0 0 1px #d9dddf, 6px 0 0 -1px #f0f3f4, 6px 0 0 0 #d9dddf; }
  .dot { width: 9px; height: 5px; border-radius: 3px; margin-top: -5px; }
  .dot.on { background: #87898a; }
  .active .dot { width: 24px; background: #0a78d4; }
  .status { position: absolute; right: 7px; top: 9px; }
  .badge-letter { font: 700 14px "Open Sans", sans-serif; fill: #fff; }
  .tray { margin-left: auto; display: flex; align-items: center; padding-right: 28px; font-size: 17.500px; line-height: 24px; color: #1b1b1b; letter-spacing: -0.1px; }
  .cloud { margin-left: 28px; }
  .lang { width: 44px; text-align: center; margin-left: 23px; letter-spacing: -0.5px; }
  .wifi { margin-left: 23px; }
  .vol { margin-left: 12px; }
  .bat { margin-left: 12px; }
  .clock { width: 90px; text-align: right; margin-left: 7px; white-space: nowrap; }
</style>
